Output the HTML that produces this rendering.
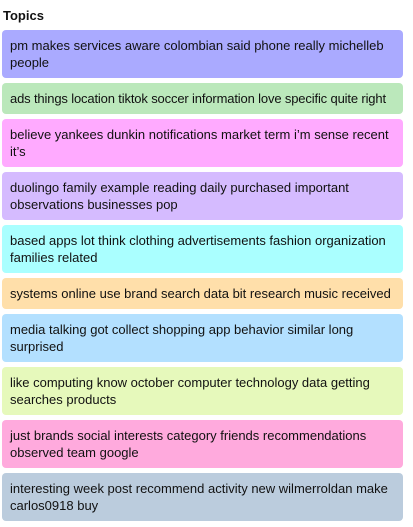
<!DOCTYPE html>
<html><head><style>
body{margin:0;background:#fff;font-family:"Liberation Sans",Arial,sans-serif;color:#111;}
h4{margin:0;position:absolute;left:3px;top:8px;font-size:13px;font-weight:bold;}
.list{position:absolute;left:2px;top:30px;width:401px;}
.t{box-sizing:border-box;padding:7px 4px 7px 8px;font-size:13px;line-height:17px;border-radius:4px;margin-bottom:5px;}
.n{white-space:nowrap;overflow:hidden;}
</style></head><body>
<h4>Topics</h4>
<div class="list">
<div class="t" style="background:#aaaaff">pm makes services aware colombian said phone really michelleb people</div>
<div class="t n" style="background:#bbe8bb;letter-spacing:-0.15px">ads things location tiktok soccer information love specific quite right</div>
<div class="t" style="background:#ffaaff">believe yankees dunkin notifications market term i’m sense recent it’s</div>
<div class="t" style="background:#d5bbff">duolingo family example reading daily purchased important observations businesses pop</div>
<div class="t" style="background:#aaffff">based apps lot think clothing advertisements fashion organization families related</div>
<div class="t n" style="background:#ffdfaa">systems online use brand search data bit research music received</div>
<div class="t" style="background:#b3e0ff">media talking got collect shopping app behavior similar long surprised</div>
<div class="t" style="background:#e6f9bb">like computing know october computer technology data getting searches products</div>
<div class="t" style="background:#ffaadd">just brands social interests category friends recommendations observed team google</div>
<div class="t" style="background:#bbccdd">interesting week post recommend activity new wilmerroldan make carlos0918 buy</div>
</div>
</body></html>
